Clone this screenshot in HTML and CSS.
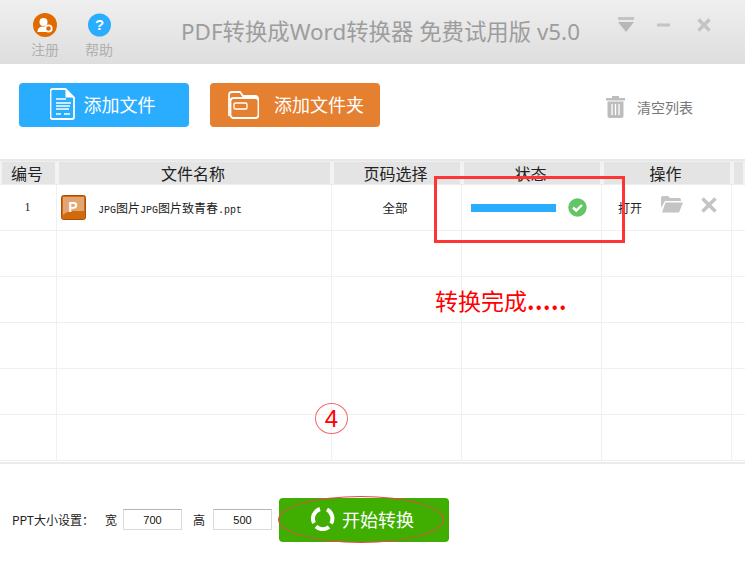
FILE: index.html
```html
<!DOCTYPE html>
<html lang="zh">
<head>
<meta charset="utf-8">
<title>PDF转换成Word转换器</title>
<link rel="stylesheet" href="styles.css">
</head>
<body>
<div class="app">
  <header class="titlebar">
    <div class="tool-btn tool-reg">
      <svg width="24" height="24" viewBox="0 0 24 24"><circle cx="12" cy="12" r="12" fill="#e06a00"/><circle cx="10.500" cy="9" r="4" fill="#fff"/><path d="M4.500 19c0-4 2.500-5.500 6-5.500 1 0 2 .2 3 .5l1 5z" fill="#fff"/><circle cx="15.500" cy="15.500" r="3.200" fill="#e06a00" stroke="#fff" stroke-width="1.800"/></svg>
      <span>注册</span>
    </div>
    <div class="tool-btn tool-help">
      <svg width="23" height="24" viewBox="0 0 23 24"><circle cx="11.500" cy="12" r="11.500" fill="#2badff"/><text x="11.500" y="17" class="help-q">?</text></svg>
      <span>帮助</span>
    </div>
    <h1 class="title">PDF转换成Word转换器 免费试用版 v5.0</h1>
    <div class="win-btns">
      <svg width="16" height="16" viewBox="0 0 16 16"><rect x="0" y="0" width="16" height="3" fill="#c4c4c4"/><path d="M0 5h16l-8 10z" fill="#b8b8b8"/></svg>
      <svg width="13" height="4" viewBox="0 0 13 4"><rect width="13" height="3" y="0.500" fill="#c4c4c4"/></svg>
      <svg class="win-x" width="14" height="14" viewBox="0 0 14 14"><path d="M1.500 1.500l11 11M12.500 1.500l-11 11" stroke="#c4c4c4" stroke-width="3.400"/></svg>
    </div>
  </header>

  <section class="toolbar">
    <button class="big-btn blue">
      <svg width="26" height="32" viewBox="0 0 26 32" fill="none"><path d="M2.500 1h13l8.500 8.500V29a2 2 0 0 1-2 2H2.500a2 2 0 0 1-2-2V3a2 2 0 0 1 2-2z" fill="#2badff" stroke="#fff" stroke-width="1.800"/><path d="M15.500 1.500v8h8" fill="#fff"/><path d="M6 11h10M6 15h15M6 18h14M6 21h13M6 26h5M14 26h6" stroke="#fff" stroke-width="1.400"/></svg>
      <span>添加文件</span>
    </button>
    <button class="big-btn orange">
      <svg width="33" height="29" viewBox="0 0 33 29" fill="none" stroke="#fff" stroke-width="1.800"><path d="M3 26V5q0-3 3-3h8l3 4h12q3 0 3 3v16q0 3-3 3H6"/><rect x="4.500" y="8" width="28" height="20" rx="3" fill="#e58031"/><rect x="8" y="13" width="13" height="6" rx="1.500" stroke-width="1.400"/></svg>
      <span>添加文件夹</span>
    </button>
    <div class="clear-list">
      <svg width="19" height="22" viewBox="0 0 19 22"><rect x="6" y="0" width="7" height="2" fill="#bdbdbd"/><rect x="0" y="2" width="19" height="2.500" fill="#bdbdbd"/><path d="M1.500 5.500h16V20a2 2 0 0 1-2 2h-12a2 2 0 0 1-2-2z" fill="#bdbdbd"/><path d="M6 8v11M9.500 8v11M13 8v11" stroke="#fff" stroke-width="1.300"/></svg>
      <span>清空列表</span>
    </div>
  </section>

  <section class="table">
    <div class="row head">
      <div>编号</div><div>文件名称</div><div>页码选择</div><div>状态</div><div>操作</div><div></div>
    </div>
    <div class="row body">
      <div class="num">1</div>
      <div class="file">
        <svg width="25" height="25" viewBox="0 0 25 25"><rect x=".5" y=".5" width="24" height="24" rx="2" fill="#d06a0c" stroke="#a8500a"/><path d="M2 2h21v14H12q-6 0-10 4z" fill="#e3a673"/><text x="12" y="16.500" class="ppt-p">P</text></svg>
        <span class="file-name"><span class="lat">JPG</span>图片<span class="lat">JPG</span>图片致青春<span class="lat">.ppt</span></span>
      </div>
      <div class="pages">全部</div>
      <div class="status">
        <div class="bar"></div>
        <svg width="19" height="19" viewBox="0 0 19 19"><circle cx="9.500" cy="9.500" r="9.200" fill="#64c566"/><path d="M5 9.500l3.200 3 5.800-5.500" fill="none" stroke="#fff" stroke-width="2.400"/></svg>
      </div>
      <div class="ops">
        <span>打开</span>
        <svg class="op-icon" width="22" height="17" viewBox="0 0 22 17"><path d="M0 2q0-2 2-2h5l2 2h9q2 0 2 2v1H4L0 12z" fill="#c4c4c4"/><path d="M4.500 6.500H22l-4 10H1z" fill="#c4c4c4"/></svg>
        <svg class="op-icon op-x" width="16" height="16" viewBox="0 0 16 16"><path d="M1.500 1.500l13 13M14.500 1.500l-13 13" stroke="#c4c4c4" stroke-width="3.600"/></svg>
      </div>
      <div></div>
    </div>
    <div class="row body"><div></div><div></div><div></div><div></div><div></div><div></div></div>
    <div class="row body"><div></div><div></div><div></div><div></div><div></div><div></div></div>
    <div class="row body"><div></div><div></div><div></div><div></div><div></div><div></div></div>
    <div class="row body"><div></div><div></div><div></div><div></div><div></div><div></div></div>
    <div class="row body"><div></div><div></div><div></div><div></div><div></div><div></div></div>
  </section>

  <footer class="footer">
    <span class="size-label">PPT大小设置：</span>
    <span class="dim-label">宽</span>
    <input class="dim dim-w" value="700">
    <span class="dim-label dim-label-h">高</span>
    <input class="dim" value="500">
    <button class="start">
      <svg width="25" height="25" viewBox="0 0 25 25" fill="none" stroke="#fff" stroke-width="4"><path d="M10 3a10 10 0 0 0-6 14"/><path d="M6 20.500a10 10 0 0 0 13 .5"/><path d="M17 3.500a10 10 0 0 1 4 14"/></svg>
      <span>开始转换</span>
    </button>
  </footer>

  <div class="note-box"></div>
  <div class="note-text">转换完成<span class="note-dots">.....</span></div>
  <div class="note-step">4</div>
  <div class="note-oval"></div>
</div>
</body>
</html>
```

FILE: styles.css
```css
* { box-sizing: border-box; }
html, body { margin: 0; padding: 0; background: #fff; }
body { font-family: "Noto Sans CJK SC", "Liberation Sans", sans-serif; }
.app { position: relative; width: 745px; height: 567px; overflow: hidden; }

.titlebar {
  height: 64px;
  display: flex;
  align-items: flex-start;
  background: linear-gradient(#efefef, #dedede);
  padding-left: 28px;
}
.tool-btn { display: flex; flex-direction: column; align-items: center; width: 34px; padding-top: 13px; font-size: 14px; line-height: 16px; color: #b0b0b0; }
.tool-btn span { margin-top: 4px; white-space: nowrap; }
.tool-help { margin-left: 20px; }
.help-q { font: bold 15px "Liberation Sans", sans-serif; fill: #fff; text-anchor: middle; }
.title {
  margin: 16px 0 0 65px;
  font-size: 22.4px;
  line-height: 32px;
  font-weight: 400;
  color: #9d9d9d;
  white-space: nowrap;
  width: 437px;
  font-family: "Noto Sans", "Noto Sans CJK SC", sans-serif;
}
.win-btns { display: flex; align-items: center; gap: 23px; margin: 17px 0 0 0; }
.win-x { margin-left: 4px; }

.toolbar { height: 95px; display: flex; align-items: flex-start; padding: 19px 0 0 19px; }
.big-btn {
  height: 44px;
  border: 0;
  border-radius: 4px;
  color: #fff;
  display: flex;
  align-items: center;
  justify-content: center;
  gap: 8px;
  font: 18px "Noto Sans CJK SC", sans-serif;
  padding: 0 0 2px;
}
.blue { width: 170px; background: #2badff; padding-right: 3px; }
.orange { width: 170px; margin-left: 21px; background: #e58031; gap: 15px; }
.clear-list { display: flex; align-items: center; gap: 12px; margin: 13px 0 0 226px; font-size: 14px; color: #777; }

.table { border-top: 2px solid #e8e8e8; }
.row { display: grid; grid-template-columns: 57px 275px 130px 140px 130px 13px; }
.row.head { height: 24px; padding: 1px 0; background: #eeeeee; }
.row.head > div { background: #e4e4e4; border-left: 2px solid #f3f3f3; border-right: 2px solid #f3f3f3; padding-right: 3px; text-align: center; font-size: 16px; line-height: 22px; color: #222; height: 22px; white-space: nowrap; }
.row.body { height: 46px; border-bottom: 1px solid #f0f0f0; }
.row.body > div { border-right: 1px solid #f0f0f0; display: flex; align-items: center; font: 11px "Noto Sans CJK SC", sans-serif; color: #222; }
.row.body > div:last-child { border-right: 0; }
.row.body .num { justify-content: center; padding-right: 1px; font: 12px "Liberation Serif", serif; }
.file { padding-left: 4px; gap: 12px; }
.file-name { font: 12px "Noto Sans CJK SC", sans-serif; white-space: nowrap; }
.lat { font: 10px "Liberation Mono", monospace; }
.ppt-p { font: bold 14px "Liberation Sans", sans-serif; fill: #fff; text-anchor: middle; }
.row.body .pages { justify-content: center; padding-right: 3px; font-size: 12.500px; }
.status { padding-left: 9px; }
.bar { width: 85px; height: 8px; background: #2badff; margin-right: 12px; }
.ops { padding-left: 16px; }
.ops span { font-size: 12px; margin-right: 19px; }
.op-icon { margin-top: -6px; }
.op-x { margin-left: 18px; }

.footer { display: flex; align-items: center; height: 104px; border-top: 2px solid #ececec; padding: 9px 0 0 12px; margin-top: 1px; font-size: 12px; color: #222; }
.size-label { width: 93px; white-space: nowrap; font-size: 12px; }
.dim-label { margin-right: 6px; }
.dim-label-h { margin-right: 8px; }
.dim { width: 59px; height: 21px; border: 1px solid #d8dae2; border-top-color: #b5b5b5; padding: 0; text-align: center; font: 11px "Liberation Sans", sans-serif; color: #111; background: #fff; outline: 0; }
.dim-w { margin-right: 11px; }
.start {
  width: 170px;
  height: 44px;
  margin-left: 7px;
  border: 0;
  border-radius: 4px;
  background: #3fae01;
  color: #fff;
  font: 18px "Noto Sans CJK SC", sans-serif;
  display: flex;
  align-items: center;
  justify-content: center;
  gap: 7px;
  padding: 0 4px 2px 0;
}

.note-box { position: absolute; left: 434px; top: 176px; width: 191px; height: 67px; border: 3px solid #ff3535; }
.note-text { position: absolute; left: 435px; top: 285px; font-size: 23px; line-height: 30px; color: #f00; font-family: "Noto Sans CJK SC", sans-serif; white-space: nowrap; }
.note-dots { font-weight: 700; letter-spacing: .5px; }
.note-step { position: absolute; left: 315px; top: 403px; width: 33px; height: 31px; border: 1px solid #f36a6a; border-radius: 50%; text-align: center; font: 24px/29px "Liberation Sans", sans-serif; color: #f00; }
.note-oval { position: absolute; left: 278px; top: 496px; width: 166px; height: 47px; border: 1px solid #e8484a; border-radius: 50%; }
```
